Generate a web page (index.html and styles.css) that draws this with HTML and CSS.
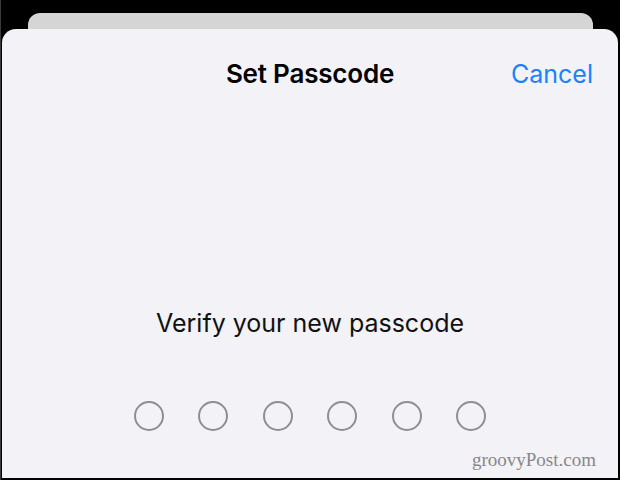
FILE: index.html
```html
<!DOCTYPE html>
<html lang="en">
<head>
<meta charset="utf-8">
<title>Set Passcode</title>
<link rel="stylesheet" href="styles.css">
</head>
<body>
<div class="screen">
  <div class="back-card"></div>
  <div class="sheet">
    <div class="nav">
      <div class="nav-side"></div>
      <div class="nav-title">Set Passcode</div>
      <div class="nav-side nav-action">Cancel</div>
    </div>
    <div class="prompt">Verify your new passcode</div>
    <div class="dots">
      <span class="dot"></span>
      <span class="dot"></span>
      <span class="dot"></span>
      <span class="dot"></span>
      <span class="dot"></span>
      <span class="dot"></span>
    </div>
    <div class="watermark">groovyPost.com</div>
  </div>
</div>
</body>
</html>
```
FILE: styles.css
```css
html, body {
  margin: 0;
  padding: 0;
  background: #000;
}
.screen {
  width: 620px;
  height: 480px;
  box-sizing: border-box;
  padding: 13px 2px 2px 1px;
  display: flex;
  flex-direction: column;
  border-left: 1px solid #3a3a3a;
  font-family: Inter, "Liberation Sans", sans-serif;
}
.back-card {
  height: 16px;
  margin: 0 25px 0 26px;
  background: #d4d5d4;
  border-radius: 12px 12px 0 0;
  flex: none;
}
.sheet {
  flex: 1;
  position: relative;
  background: #f2f2f7;
  border-radius: 14px 14px 0 0;
  display: flex;
  flex-direction: column;
  align-items: center;
}
.nav {
  align-self: stretch;
  display: flex;
  align-items: baseline;
  justify-content: space-between;
  padding: 29px 25px 0 25px;
}
.nav-side {
  width: 90px;
}
.nav-title {
  font-size: 26px;
  font-weight: 600;
  color: #000;
  letter-spacing: -0.2px;
}
.nav-action {
  text-align: right;
  font-size: 25px;
  color: #1a82fb;
}
.prompt {
  margin-top: 219px;
  font-size: 25px;
  color: #111;
}
.dots {
  display: flex;
  gap: 34.5px;
  margin-top: 63px;
}
.dot {
  width: 30px;
  height: 30px;
  box-sizing: border-box;
  border: 2px solid #8e8e93;
  border-radius: 50%;
}
.watermark {
  position: absolute;
  right: 22px;
  bottom: 7px;
  font-family: "Liberation Serif", serif;
  font-size: 19px;
  color: #888;
}
```
